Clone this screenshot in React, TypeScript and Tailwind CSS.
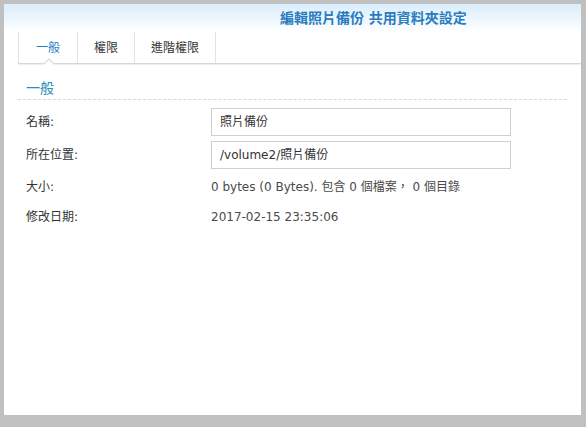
import React from "react";

const font = { fontFamily: '"DejaVu Sans", "Noto Sans CJK TC", sans-serif' };

function Tabs() {
  const tabs = [
    { label: "一般", w: "w-[59px]", active: true },
    { label: "權限", w: "w-[57px]", active: false },
    { label: "進階權限", w: "w-[81px]", active: false },
  ];
  return (
    <div className="ml-[14px] flex h-[32px] border-b border-[#d6d6d6] shadow-[0_1px_1px_rgba(0,0,0,0.06)]">
      <div className="flex border-l border-[#e2e2e2]">
        {tabs.map((t) => (
          <div
            key={t.label}
            className={`relative flex items-center justify-center border-r border-[#e2e2e2] text-[12px] ${t.w} ${
              t.active ? "text-[#1f7fc4]" : "text-[#333]"
            }`}
          >
            {t.label}
            {t.active && (
              <span className="absolute bottom-[-5px] left-[26px] h-[8px] w-[8px] rotate-45 border-l border-t border-[#d6d6d6] bg-white" />
            )}
          </div>
        ))}
      </div>
    </div>
  );
}

function Row({ label, children, input }: { label: string; children: React.ReactNode; input?: boolean }) {
  return (
    <div className={`flex items-center pl-[8px] ${input ? "h-[28px]" : "h-[30px]"}`}>
      <div className="w-[185px] text-[12px] text-[#333]">{label}</div>
      {input ? (
        <div className="flex h-[28px] w-[300px] items-center border border-[#cfcfcf] px-[8px] text-[12px] text-[#333]">
          {children}
        </div>
      ) : (
        <div className="text-[12px] text-[#4a4a4a]">{children}</div>
      )}
    </div>
  );
}

export default function App() {
  return (
    <div className="h-[427px] w-[586px] bg-[#c0c0c0] pl-[4px] pt-[4px]" style={font}>
      <div className="flex h-[411px] w-[577px] flex-col bg-white">
        <div className="h-[28px] bg-gradient-to-b from-[#d9edfc] to-white pl-[276px] pt-[4px] text-[14px] font-bold leading-[20px] text-[#2a7cc0]">
          編輯照片備份 共用資料夾設定
        </div>
        <Tabs />
        <div className="mx-[14px] border-b border-dashed border-[#d8d8d8] pb-[2px] pl-[8px] pt-[15px] text-[14px] leading-[18px] text-[#2a8bbd]">
          一般
        </div>
        <div className="mx-[14px] mt-[8px] flex flex-col">
          <Row label="名稱:" input>
            照片備份
          </Row>
          <div className="h-[5px]" />
          <Row label="所在位置:" input>
            /volume2/照片備份
          </Row>
          <div className="h-[3px]" />
          <Row label="大小:">0 bytes (0 Bytes). 包含 0 個檔案， 0 個目錄</Row>
          <Row label="修改日期:">2017-02-15 23:35:06</Row>
        </div>
      </div>
    </div>
  );
}
